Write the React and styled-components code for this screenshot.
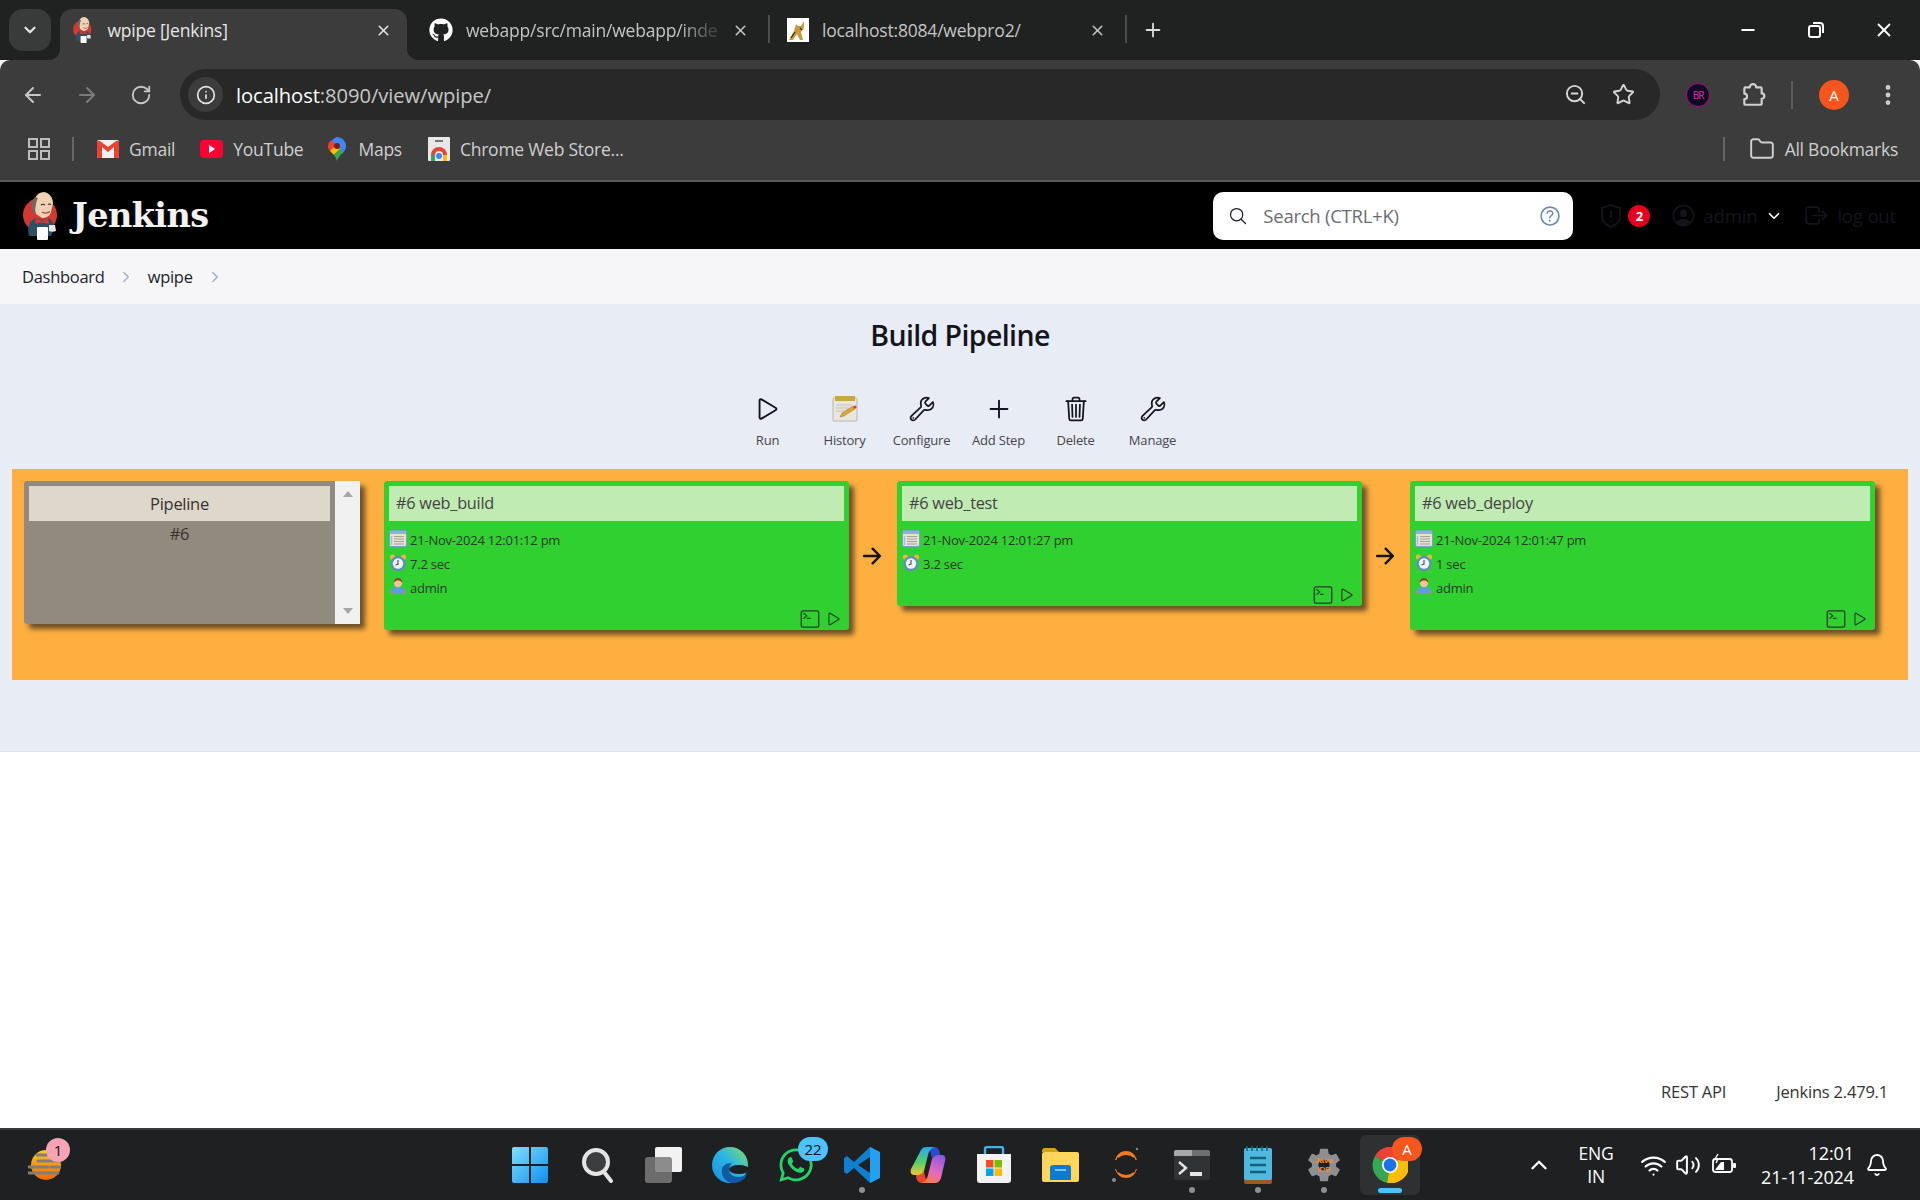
import React from "react";
import styled, { createGlobalStyle } from "styled-components";
import {
  ArrowLeft, ArrowRight, RotateCw, Info, ZoomOut, Star, EllipsisVertical,
  Folder, ChevronDown, ChevronUp, Minus, X, Plus, Wifi, Volume2, Bell,
} from "lucide-react";
import { FaGithub, FaWhatsapp } from "react-icons/fa";
import {
  IoPlayOutline, IoBuildOutline, IoAddOutline, IoTrashOutline, IoTerminalOutline,
  IoArrowForwardOutline, IoSearchOutline, IoHelpCircleOutline, IoPersonCircleOutline,
  IoLogOutOutline, IoChevronForward, IoSettingsSharp,
} from "react-icons/io5";

const Global = createGlobalStyle`
  html, body { margin: 0; padding: 0; background: #fff; }
  body { font-family: "Open Sans", "Noto Sans", sans-serif; }
  * { box-sizing: border-box; }
`;

const Screen = styled.div`
  width: 1920px;
  height: 1200px;
  display: flex;
  flex-direction: column;
  overflow: hidden;
`;

/* ---------- browser chrome ---------- */
const TabStrip = styled.div`
  height: 60px;
  background: #202221;
  display: flex;
  align-items: flex-end;
  padding-left: 9px;
  color: #c7c7c7;
`;
const TabMenu = styled.div`
  width: 42px;
  height: 42px;
  margin: 0 9px 9px 0;
  border-radius: 14px;
  background: #393b3b;
  display: flex;
  align-items: center;
  justify-content: center;
  color: #e3e3e3;
`;
const Tab = styled.div`
  position: relative;
  width: ${(p) => p.$w}px;
  height: 51px;
  padding: 0 ${(p) => p.$pr}px 9px ${(p) => p.$pl}px;
  display: flex;
  align-items: center;
  font-size: 17.5px;
  letter-spacing: -0.2px;
  color: ${(p) => (p.$active ? "#e6e6e6" : "#c4c4c4")};
  background: ${(p) => (p.$active ? "#3c3c3c" : "transparent")};
  border-radius: 12px 12px 0 0;
  ${(p) => p.$active && `
    &::before, &::after {
      content: "";
      position: absolute;
      bottom: 0;
      width: 12px;
      height: 12px;
    }
    &::before { left: -12px; background: radial-gradient(circle at 0 0, transparent 12px, #3c3c3c 12.5px); }
    &::after { right: -12px; background: radial-gradient(circle at 100% 0, transparent 12px, #3c3c3c 12.5px); }
  `}
`;
const TabDivider = styled.div`
  width: 2px;
  height: 28px;
  margin-bottom: 17px;
  background: #4c4e4e;
`;
const TabTitle = styled.span`
  flex: 1;
  margin-left: ${(p) => p.$gap}px;
  white-space: nowrap;
  -webkit-mask-image: ${(p) => (p.$fade ? "linear-gradient(90deg,#000 80%,rgba(0,0,0,.25) 92%)" : "none")};
`;
const NewTab = styled.div`
  width: 52px;
  height: 42px;
  margin-bottom: 9px;
  display: flex;
  align-items: center;
  justify-content: center;
  color: #dcdcdc;
`;
const WindowControls = styled.div`
  margin-left: auto;
  height: 60px;
  display: flex;
  align-items: center;
  padding-right: 2px;
  color: #fff;
`;
const WindowButton = styled.div`
  width: 68px;
  display: flex;
  justify-content: center;
`;
const ToolbarRow = styled.div`
  height: 60px;
  background: #3c3c3c;
  border-radius: 10px 10px 0 0;
  display: flex;
  align-items: flex-start;
  padding: 9px 0 0 0;
  color: #c7c7c7;
`;
const NavButton = styled.div`
  width: 54px;
  height: 51px;
  display: flex;
  align-items: center;
  justify-content: center;
  color: ${(p) => (p.$off ? "#7b7b7b" : "#c7c7c7")};
`;
const NavGroup = styled.div`
  display: flex;
  padding-left: 6px;
  width: 180px;
`;
const Omnibox = styled.div`
  width: 1480px;
  height: 51px;
  background: #282828;
  border-radius: 26px;
  display: flex;
  align-items: center;
  padding: 0 13px 0 8px;
`;
const SiteChip = styled.div`
  width: 35px;
  height: 35px;
  border-radius: 50%;
  background: #3c3c3c;
  display: flex;
  align-items: center;
  justify-content: center;
  color: #e3e3e3;
`;
const Url = styled.div`
  margin-left: 13px;
  flex: 1;
  font-size: 20.2px;
  letter-spacing: -0.08px;
  color: #c7c7c7;
  b { font-weight: 400; color: #fff; }
`;
const OmniIcon = styled.div`
  width: 48px;
  display: flex;
  justify-content: center;
  color: #d6d6d6;
`;
const ExtArea = styled.div`
  flex: 1;
  height: 51px;
  display: flex;
  align-items: center;
`;
const ExtBadge = styled.div`
  width: 24px;
  height: 24px;
  margin-left: 26px;
  border-radius: 50%;
  background: #0b0b22;
  border: 1px solid #c2008c;
  color: #f020b0;
  font-size: 10px;
  letter-spacing: -1px;
  display: flex;
  align-items: center;
  justify-content: center;
`;
const ToolSep = styled.div`
  width: 2px;
  height: 28px;
  background: #5c5c5c;
  margin-left: ${(p) => p.$ml}px;
`;
const Avatar = styled.div`
  width: 30px;
  height: 30px;
  margin-left: 26px;
  border-radius: 50%;
  background: #f4561d;
  color: #fff;
  font-size: 15px;
  display: flex;
  align-items: center;
  justify-content: center;
`;
const PuzzleWrap = styled.div`
  margin-left: 30px;
  display: flex;
  color: #d0d0d0;
`;
const MenuDots = styled.div`
  margin-left: 26px;
  display: flex;
  color: #d0d0d0;
`;
const BookmarkBar = styled.div`
  height: 62px;
  background: #3c3c3c;
  border-bottom: 2px solid #5a5a5a;
  display: flex;
  align-items: center;
  padding-left: 28px;
  padding-bottom: 2px;
  font-size: 17.5px;
  letter-spacing: -0.25px;
  color: #cfcfcf;
`;
const BarSep = styled.div`
  width: 2px;
  height: 24px;
  background: #666;
  margin: 0 ${(p) => p.$mr}px 0 ${(p) => p.$ml}px;
`;
const Bookmark = styled.div`
  display: flex;
  align-items: center;
  gap: ${(p) => p.$gap || 10}px;
  margin-right: ${(p) => p.$mr}px;
  white-space: nowrap;
`;
const BookmarkEnd = styled.div`
  margin-left: auto;
  display: flex;
  align-items: center;
  padding-right: 22px;
`;

/* ---------- jenkins header ---------- */
const Header = styled.header`
  height: 67px;
  background: #000;
  display: flex;
  align-items: center;
  padding-left: 23px;
`;
const Brand = styled.div`
  display: flex;
  align-items: center;
  gap: 13px;
  font-family: "DejaVu Serif", serif;
  font-weight: 700;
  font-size: 33.5px;
  letter-spacing: -0.6px;
  color: #f2f2f2;
`;
const SearchBox = styled.div`
  margin-left: auto;
  width: 360px;
  height: 48px;
  border-radius: 10px;
  background: #fff;
  display: flex;
  align-items: center;
  padding: 0 10px 0 15px;
  font-size: 18.5px;
  letter-spacing: -0.25px;
  color: #6c6c72;
`;
const SearchText = styled.span`
  flex: 1;
  margin-left: 15px;
`;
const HeaderAction = styled.div`
  display: flex;
  align-items: center;
  color: #14141f;
  font-size: 18.6px;
  letter-spacing: -0.2px;
  margin-left: ${(p) => p.$ml}px;
  gap: ${(p) => p.$gap || 0}px;
`;
const CountBadge = styled.span`
  width: 22px;
  height: 22px;
  border-radius: 50%;
  background: #e6001f;
  color: #fff;
  font-size: 13px;
  font-weight: 700;
  display: flex;
  align-items: center;
  justify-content: center;
`;
const HeaderRight = styled.div`
  display: flex;
  align-items: center;
  padding-right: 24px;
`;
const Caret = styled.span`
  display: flex;
  color: #fff;
  margin-left: 2px;
`;

/* ---------- breadcrumb ---------- */
const Crumbs = styled.nav`
  height: 55px;
  background: #f6f6f8;
  display: flex;
  align-items: center;
  padding-left: 22px;
  font-size: 16.5px;
  font-weight: 500;
  letter-spacing: -0.28px;
  color: #1e1e2a;
`;
const CrumbArrow = styled.span`
  display: flex;
  color: #9db0cc;
  margin: 0 ${(p) => p.$mr}px 0 ${(p) => p.$ml}px;
`;

/* ---------- build pipeline ---------- */
const PipelineArea = styled.main`
  height: 448px;
  background: #e8ecf4;
  border-bottom: 1px solid #dfe3ea;
  display: flex;
  flex-direction: column;
  padding-top: 12px;
`;
const Title = styled.h1`
  margin: 0;
  height: 38px;
  line-height: 38px;
  text-align: center;
  font-size: 28.5px;
  font-weight: 600;
  letter-spacing: -0.6px;
  color: #14141f;
`;
const ActionBar = styled.div`
  display: flex;
  justify-content: center;
  padding: 40px 0 19px;
`;
const ActionItem = styled.div`
  width: 77px;
  display: flex;
  flex-direction: column;
  align-items: center;
  font-size: 13px;
  letter-spacing: -0.2px;
  color: #45454d;
`;
const ActionIcon = styled.div`
  height: 30px;
  display: flex;
  align-items: center;
  justify-content: center;
  color: #14141f;
  margin-bottom: 6px;
`;
const ActionLabel = styled.div`
  height: 20px;
  line-height: 20px;
`;
const Stage = styled.div`
  height: 211px;
  margin: 0 12px;
  background: #feaf40;
  padding: 12px;
  display: flex;
  align-items: flex-start;
`;
const RevisionPane = styled.div`
  width: 336px;
  height: 143px;
  margin-right: 24px;
  display: flex;
  box-shadow: 5px 5px 5px rgba(50, 40, 30, 0.7);
  border-radius: 3px 0 0 3px;
`;
const RevisionBody = styled.div`
  flex: 1;
  background: #918a7f;
  padding: 5px;
  border-radius: 3px 0 0 3px;
  text-align: center;
  font-size: 16.5px;
  letter-spacing: -0.3px;
  color: #38332d;
`;
const RevisionHead = styled.div`
  height: 35px;
  line-height: 35px;
  background: #ded7cc;
`;
const RevisionCell = styled.div`
  margin-top: 1px;
  height: 24px;
  line-height: 24px;
`;
const ScrollTrack = styled.div`
  width: 25px;
  background: #f1f1f1;
  display: flex;
  flex-direction: column;
  justify-content: space-between;
  align-items: center;
  padding: 10px 0;
`;
const ScrollArrow = styled.div`
  width: 0;
  height: 0;
  border-left: 5.5px solid transparent;
  border-right: 5.5px solid transparent;
  ${(p) => (p.$up ? "border-bottom: 6px solid #a6a6a6;" : "border-top: 6px solid #a6a6a6;")}
`;
const BuildCard = styled.div`
  width: 465px;
  flex: none;
  background: #30d030;
  padding: 5px 5px 3px;
  border-radius: 3px;
  box-shadow: 5px 5px 5px rgba(50, 40, 30, 0.7);
  color: #333;
`;
const BuildHead = styled.div`
  height: 35px;
  line-height: 35px;
  padding-left: 7px;
  background: #c0ebb3;
  font-size: 16.3px;
  letter-spacing: -0.25px;
  color: #444;
`;
const BuildMeta = styled.div`
  margin-top: 9px;
  display: flex;
  flex-direction: column;
  gap: 7px;
`;
const MetaRow = styled.div`
  height: 17px;
  display: flex;
  align-items: center;
  gap: 3px;
  font-size: 13px;
  letter-spacing: -0.22px;
  color: #2f3a2f;
  span { position: relative; top: 1px; }
`;
const BuildTools = styled.div`
  margin-top: 15px;
  height: 17px;
  padding-right: 1px;
  display: flex;
  justify-content: flex-end;
  align-items: center;
  gap: 5px;
  color: #2c3a2c;
`;
const Connector = styled.div`
  width: 48px;
  flex: none;
  height: 149px;
  padding-right: 3px;
  display: flex;
  align-items: center;
  justify-content: center;
  color: #14141f;
`;

/* ---------- footer ---------- */
const Blank = styled.div`
  flex: 1;
  background: #fff;
  display: flex;
  justify-content: flex-end;
  align-items: flex-end;
  padding: 0 32px 25px 0;
  gap: 50px;
  font-size: 16.5px;
  letter-spacing: -0.2px;
  color: #333;
`;

/* ---------- windows taskbar ---------- */
const Taskbar = styled.div`
  height: 72px;
  background: #1e2022;
  border-top: 2px solid #3a3a3a;
  display: flex;
  align-items: stretch;
  color: #fff;
`;
const WidgetSlot = styled.div`
  width: 499px;
  padding-left: 28px;
  display: flex;
  align-items: center;
`;
const WidgetIcon = styled.div`
  position: relative;
  display: flex;
`;
const WidgetBadge = styled.span`
  position: absolute;
  top: -11px;
  right: -6px;
  width: 24px;
  height: 24px;
  border-radius: 50%;
  background: #f6a3b4;
  color: #111;
  font-size: 15px;
  display: flex;
  align-items: center;
  justify-content: center;
`;
const TaskIcons = styled.div`
  display: flex;
`;
const TaskSlot = styled.div`
  position: relative;
  width: 66px;
  display: flex;
  align-items: center;
  justify-content: center;
  ${(p) => p.$current && `
    &::before {
      content: "";
      position: absolute;
      left: 3px; right: 3px; top: 5px; bottom: 5px;
      background: #2e3032;
      border-radius: 6px;
    }
  `}
  > * { position: relative; }
`;
const RunDot = styled.span`
  position: absolute !important;
  bottom: 7px;
  left: 50%;
  margin-left: ${(p) => (p.$current ? -12 : -3)}px;
  width: ${(p) => (p.$current ? 24 : 6)}px;
  height: ${(p) => (p.$current ? 5 : 6)}px;
  border-radius: 3px;
  background: ${(p) => (p.$current ? "#4cc2ff" : "#8f8f8f")};
`;
const TaskBadge = styled.span`
  position: absolute !important;
  top: 7px;
  right: 1px;
  min-width: 30px;
  height: 24px;
  border-radius: 12px;
  background: ${(p) => p.$bg};
  color: ${(p) => p.$fg};
  font-size: 15px;
  display: flex;
  align-items: center;
  justify-content: center;
`;
const Tray = styled.div`
  margin-left: auto;
  display: flex;
  align-items: center;
  padding-right: 31px;
  font-size: 18px;
`;
const TrayLang = styled.div`
  width: 60px;
  margin-left: 14px;
  text-align: center;
  line-height: 23px;
  letter-spacing: -0.2px;
  font-size: 17.5px;
`;
const TrayIcon = styled.div`
  display: flex;
  margin-left: ${(p) => p.$ml}px;
`;
const Clock = styled.div`
  margin-left: 24px;
  text-align: right;
  line-height: 24px;
  letter-spacing: -0.1px;
`;

/* ---------- drawings ---------- */
const JenkinsLogo = ({ size = 48 }) => (
  <svg width={size * 0.75} height={size} viewBox="0 0 36 48">
    <circle cx="17" cy="23" r="17" fill="#d33833" />
    <path d="M6 44c-2-7-1-15 7-18l6 2 6-2c4 2 6 6 6 10l-3 8z" fill="#2f4f63" />
    <path d="M12 6c-2 3-2 7-1 10l2 6 6 4c4 0 8-2 9-6l2-9c0-6-4-10-9-11-4 0-7 2-9 6z" fill="#eed2b2" />
    <path d="M12 5c-3 3-4 9-2 15l3 3c-1-3-1-7 0-10 0-3 1-5 2-7z" fill="#6d6a65" />
    <path d="M18 13q2-1.500 4 0M25 12.500q1.500-1 3 0" stroke="#3a2a20" strokeWidth="1.200" fill="none" />
    <path d="M19 20q4 2.500 8-.5" stroke="#8a5a50" strokeWidth="1.400" fill="none" />
    <path d="M13 26l6 3 6-3 1 6-6-1.500-1 1-1-1-6 1.500z" fill="#d33833" />
    <rect x="14" y="35" width="11" height="13" rx="1" fill="#fff" />
    <path d="M26 33h6l1 6c-2 1-5 1-7 0z" fill="#e8e6e0" />
  </svg>
);

const Gmail = () => (
  <svg width="22" height="18" viewBox="0 0 22 18">
    <rect width="22" height="18" rx="2" fill="#f0f0f0" />
    <path d="M0 3v13a2 2 0 0 0 2 2h3V7l6 5 6-5v11h3a2 2 0 0 0 2-2V3a2 2 0 0 0-3-2l-8 6-8-6a2 2 0 0 0-3 2z" fill="#ea4335" />
  </svg>
);
const YouTube = () => (
  <svg width="23" height="18" viewBox="0 0 23 18">
    <rect width="23" height="18" rx="4" fill="#ff0033" />
    <path d="M9 5l6 4-6 4z" fill="#fff" />
  </svg>
);
const Maps = () => (
  <svg width="18" height="24" viewBox="0 0 18 24">
    <path d="M9 0a9 9 0 0 1 9 9c0 3-2 6-4 8L3 6a9 9 0 0 1 6-6z" fill="#4285f4" />
    <path d="M3 3a9 9 0 0 0-3 6c0 2 1 4 2 5l6-6z" fill="#ea4335" />
    <path d="M2 14l6-6 4 4-6 6z" fill="#fbbc04" />
    <path d="M6 18l6-6 3 3c-2 3-5 5-6 9-1-3-2-4-3-6z" fill="#34a853" />
    <circle cx="9" cy="9" r="3" fill="#7a1f18" />
  </svg>
);
const WebStore = () => (
  <svg width="22" height="24" viewBox="0 0 22 24">
    <rect width="22" height="24" rx="1" fill="#e8e8e8" />
    <rect x="7" y="3" width="8" height="2" fill="#777" />
    <path d="M3 24v-6a8 8 0 0 1 16 0v6h-4v-6a4 4 0 0 0-8 0v6z" fill="#ea4335" />
    <path d="M3 24v-6h4v6z" fill="#34a853" />
    <path d="M15 24v-6h4v6z" fill="#fbbc04" />
    <circle cx="11" cy="19" r="3" fill="#4285f4" />
  </svg>
);
const Tomcat = () => (
  <svg width="22" height="24" viewBox="0 0 22 24">
    <rect width="22" height="24" fill="#fff" />
    <path d="M2 22l5-9 2-7 2 2 3 0 3-5v7l-3 4 2 8h-3l-3-6-4 6z" fill="#c79a3d" />
    <path d="M4 20l4-6M13 10l2 2" stroke="#3a2a14" strokeWidth="1.2" />
  </svg>
);
const AppsGrid = () => (
  <svg width="22" height="22" viewBox="0 0 22 22" fill="none" stroke="#bdbdbd" strokeWidth="2">
    <rect x="1" y="1" width="8" height="8" />
    <rect x="13" y="1" width="8" height="8" />
    <rect x="1" y="13" width="8" height="8" />
    <rect x="13" y="13" width="8" height="8" />
  </svg>
);
const ChromePuzzle = () => (
  <svg width="26" height="26" viewBox="0 0 24 24" fill="none" stroke="currentColor" strokeWidth="2" strokeLinejoin="round">
    <path d="M5 5h4a3 3 0 0 1 6 0h4a1 1 0 0 1 1 1v4.500a2.500 2.500 0 0 1 0 5V20a1 1 0 0 1-1 1H5a1 1 0 0 1-1-1v-4.200a2.500 2.500 0 0 0 0-5V6a1 1 0 0 1 1-1z" />
  </svg>
);
const Restore = () => (
  <svg width="18" height="18" viewBox="0 0 18 18" fill="none" stroke="#fff" strokeWidth="2">
    <rect x="2" y="5" width="11" height="11" rx="2" />
    <path d="M6 2h7a3 3 0 0 1 3 3v7" />
  </svg>
);
const WarnShield = () => (
  <svg width="26" height="26" viewBox="0 0 26 26" fill="none" stroke="#14141f" strokeWidth="1.8">
    <path d="M13 2l9 3v8c0 5-4 9-9 11-5-2-9-6-9-11V5z" />
    <path d="M13 8v7M13 18v1" />
  </svg>
);
const HistoryNote = () => (
  <svg width="26" height="28" viewBox="0 0 26 28">
    <rect x="1" y="3" width="24" height="23" rx="1" fill="#e8e6df" stroke="#b9b6ad" />
    <rect x="3" y="1" width="20" height="5" fill="#c9a93c" />
    <path d="M4 10h16M4 13h13M4 16h9" stroke="#c4c2bb" />
    <path d="M8 22l2-4 11-7 2 3-11 7z" fill="#e0a43a" stroke="#a67622" strokeWidth=".5" />
    <circle cx="23" cy="12" r="1.6" fill="#e23a2e" />
  </svg>
);
const CalIcon = () => (
  <svg width="18" height="17" viewBox="0 0 18 17">
    <rect x=".5" y=".5" width="17" height="16" rx="1.5" fill="#e6e2d8" stroke="#7b9fc8" />
    <rect x="1" y="1" width="16" height="3" fill="#8fb2da" />
    <path d="M5 6.5h10M5 9h10M5 11.5h10M5 14h10" stroke="#a89f8c" />
    <path d="M2.5 6v9" stroke="#9cc0e6" strokeWidth="1.5" />
  </svg>
);
const ClockIcon = () => (
  <svg width="18" height="18" viewBox="0 0 18 18">
    <circle cx="3.5" cy="3" r="2.6" fill="#e9b93e" />
    <circle cx="14.5" cy="3" r="2.6" fill="#e9b93e" />
    <circle cx="9" cy="9.5" r="7.5" fill="#5b8fc4" />
    <circle cx="9" cy="9.5" r="5.2" fill="#eef3f6" />
    <path d="M9 6v4l-2.5 1" stroke="#555" strokeWidth="1.2" fill="none" />
    <path d="M3 16l2-1.5M15 16l-2-1.5" stroke="#8a8a8a" strokeWidth="1.6" />
  </svg>
);
const UserIcon = () => (
  <svg width="18" height="17" viewBox="0 0 18 17">
    <path d="M1 16c0-5 3-7 8-7s8 2 8 7z" fill="#5a9de0" />
    <circle cx="9" cy="5" r="4.2" fill="#f0c49a" />
    <path d="M4.800 5C4.500 1.500 7 0 9 0s4.500 1.500 4.200 5c-1-2-3-2.500-4.200-2.500S5.800 3 4.800 5z" fill="#8a4a1e" />
    <path d="M1 13l3 3M17 13l-3 3" stroke="#c68a52" strokeWidth="1.6" />
  </svg>
);

/* taskbar art */
const WinLogo = () => (
  <svg width="36" height="36" viewBox="2 0 36 36" overflow="visible">
    <defs>
      <linearGradient id="win" x1="0" y1="0" x2="1" y2="1">
        <stop offset="0" stopColor="#7fe0ff" />
        <stop offset="1" stopColor="#0f8ef0" />
      </linearGradient>
    </defs>
    <path d="M2 0h15v17H0V2a2 2 0 0 1 2-2zM19 0h15a2 2 0 0 1 2 2v15H19zM0 19h17v17H2a2 2 0 0 1-2-2zM19 19h17v15a2 2 0 0 1-2 2H19z" fill="url(#win)" />
  </svg>
);
const WinSearch = () => (
  <svg width="34" height="36" viewBox="0 0 34 36" fill="none">
    <circle cx="15" cy="15" r="12" fill="#3b3d3f" stroke="#e4e4e4" strokeWidth="4" />
    <path d="M23 25l7 9" stroke="#e4e4e4" strokeWidth="4" strokeLinecap="round" />
  </svg>
);
const TaskView = () => (
  <svg width="38" height="36" viewBox="0 0 38 36">
    <rect x="10" y="0" width="27" height="25" rx="2" fill="#f2f2f2" />
    <rect x="0" y="10" width="27" height="26" rx="3" fill="#7a7a7a" fillOpacity=".85" />
  </svg>
);
const Edge = () => (
  <svg width="36" height="36" viewBox="0 0 36 36">
    <defs>
      <linearGradient id="edg" x1="0" y1="1" x2="1" y2="0">
        <stop offset="0" stopColor="#1590df" />
        <stop offset=".55" stopColor="#2cb6e4" />
        <stop offset="1" stopColor="#8be05a" />
      </linearGradient>
    </defs>
    <circle cx="18" cy="18" r="18" fill="url(#edg)" />
    <ellipse cx="27" cy="22.500" rx="10" ry="4.500" fill="#1e2022" />
    <path d="M11 19C7 28 14 36 21 36c6 0 12-3 14.500-9-5 3.500-13 4-16.500.500-3-3-2.500-8 1-11-4-1-7 .500-8 2.500z" fill="#0f5aa6" />
  </svg>
);
const VSCode = () => (
  <svg width="36" height="36" viewBox="0 0 36 36">
    <path d="M26 0L10 15 3 9 0 11v14l3 2 7-6 16 15 4-2V2zM26 10v16L14 18z" fill="#0f7fd0" fillRule="evenodd" />
    <path d="M26 0l10 5v26l-10 5z" fill="#22a0f2" />
  </svg>
);
const Copilot = () => (
  <svg width="36" height="36" viewBox="0 0 36 36">
    <defs>
      <linearGradient id="cp1" x1="0.300" y1="0" x2="0.300" y2="1">
        <stop offset="0" stopColor="#2aa6f0" />
        <stop offset=".55" stopColor="#55cf6a" />
        <stop offset="1" stopColor="#f7c52c" />
      </linearGradient>
      <linearGradient id="cp2" x1="0.700" y1="0" x2="0.300" y2="1">
        <stop offset="0" stopColor="#8e5be0" />
        <stop offset=".6" stopColor="#e76ac0" />
        <stop offset="1" stopColor="#f77f3a" />
      </linearGradient>
    </defs>
    <path d="M16 0h8c4 0 6 3 6 8h-2c-3 0-5 2-6 4-1-6-2-10-6-12z" fill="#2b4bd0" />
    <path d="M20 36h-8c-4 0-6-3-6-8h2c3 0 5-2 6-4 1 6 2 10 6 12z" fill="#e8452e" />
    <path d="M11 3c1-2 3-3 5-3h9c-4 1-6 4-7 8l-4 16c-1 2-3 4-6 4H4c-3 0-4-3-3-6z" fill="url(#cp1)" />
    <path d="M25 36h-5-9c4-1 6-4 7-8l4-16c1-2 3-4 6-4h4c3 0 4 3 3 6l-4 17c-1 3-3 5-6 5z" fill="url(#cp2)" />
  </svg>
);
const Store = () => (
  <svg width="36" height="38" viewBox="0 0 36 38">
    <path d="M9 8V3a2 2 0 0 1 2-2h14a2 2 0 0 1 2 2v5" fill="none" stroke="#3fb3ea" strokeWidth="2.4" />
    <path d="M1 8h34v26a3 3 0 0 1-3 3H4a3 3 0 0 1-3-3z" fill="#f2f2f2" />
    <rect x="10" y="14" width="7.500" height="7.500" fill="#f25022" />
    <rect x="18.500" y="14" width="7.500" height="7.500" fill="#7fba00" />
    <rect x="10" y="22.500" width="7.500" height="7.500" fill="#00a4ef" />
    <rect x="18.500" y="22.500" width="7.500" height="7.500" fill="#ffb900" />
  </svg>
);
const Files = () => (
  <svg width="37" height="34" viewBox="0 0 37 34">
    <path d="M0 3a3 3 0 0 1 3-3h10l4 4H0z" fill="#d9a013" />
    <rect y="4" width="37" height="30" rx="2" fill="#ffd65a" />
    <path d="M8 32V20a3 3 0 0 1 3-3h15a3 3 0 0 1 3 3v12z" fill="#0f7bd0" />
    <rect x="13" y="21" width="11" height="2" fill="#7cc6f5" />
  </svg>
);
const Eclipse = () => (
  <svg width="30" height="36" viewBox="0 0 30 36" fill="none">
    <path d="M4 13c2-6 6-9 11-9s9 3 11 9H4z" fill="#f07a24" />
    <path d="M4 22c2 6 6 9 11 9s9-3 11-9H4z" fill="#f07a24" />
    <path d="M6 11.500h18M6 24.500h18" stroke="#1e2022" strokeWidth="1.400" />
    <ellipse cx="15" cy="18" rx="11" ry="10" fill="#1e2022" />
    <circle cx="3" cy="33" r="2" fill="#8a8a8a" />
    <circle cx="26" cy="2" r="1.200" fill="#8a8a8a" />
  </svg>
);
const TerminalApp = () => (
  <svg width="36" height="30" viewBox="0 0 36 30" fill="none">
    <rect width="36" height="30" rx="2" fill="#2f3336" />
    <path d="M0 2a2 2 0 0 1 2-2h16v6H0z" fill="#a8a8a8" />
    <path d="M18 0h16a2 2 0 0 1 2 2v4H18z" fill="#707070" />
    <path d="M5 12l7 6-7 6" stroke="#e6e6e6" strokeWidth="2.400" />
    <rect x="16" y="22" width="12" height="4" fill="#e6e6e6" />
  </svg>
);
const Notepad = () => (
  <svg width="28" height="38" viewBox="0 0 28 38">
    <rect y="2" width="28" height="36" rx="2" fill="#9a5a1f" />
    <rect y="2" width="28" height="32" rx="2" fill="#4fb8dc" />
    <path d="M3 0v5M8 0v5M13 0v5M18 0v5M23 0v5" stroke="#17607c" strokeWidth="1.500" />
    <path d="M6 12h16M6 19h16M6 26h16" stroke="#14617f" strokeWidth="2.400" />
  </svg>
);
const GearWrap = styled.div`
  position: relative;
  width: 36px;
  height: 38px;
  color: #8f8f8f;
  display: flex;
  align-items: center;
  justify-content: center;
`;
const GearText = styled.span`
  position: absolute;
  inset: 0;
  display: flex;
  flex-direction: column;
  align-items: center;
  justify-content: center;
  color: #f0902a;
  font-family: "Liberation Sans", sans-serif;
  font-size: 8px;
  font-weight: 700;
  line-height: 9px;
`;
const Chrome = () => (
  <svg width="36" height="36" viewBox="0 0 36 36">
    <path d="M18 18L3 9a18 18 0 0 1 31-1z" fill="#ea4335" />
    <path d="M18 18L3 9a18 18 0 0 0 12 26.800z" fill="#34a853" />
    <path d="M18 18l16-10a18 18 0 0 1-19 27.800z" fill="#fbbc04" />
    <circle cx="18" cy="18" r="8" fill="#fff" />
    <circle cx="18" cy="18" r="6.400" fill="#1a73e8" />
  </svg>
);
const Sun = () => (
  <svg width="36" height="32" viewBox="0 0 36 32">
    <defs>
      <linearGradient id="sun" x1="0" y1="0" x2="0" y2="1">
        <stop offset="0" stopColor="#ffc81e" />
        <stop offset="1" stopColor="#f06a00" />
      </linearGradient>
    </defs>
    <circle cx="18" cy="16" r="15" fill="url(#sun)" />
    <path d="M9 6h10M10 12h22M1 18h19M23 18h8M0 24h30" stroke="#7e7e7e" strokeWidth="3" strokeLinecap="round" />
  </svg>
);
const Battery = () => (
  <svg width="26" height="24" viewBox="0 0 26 24" fill="none" stroke="#fff" strokeWidth="1.800">
    <rect x="2" y="6" width="19" height="13" rx="2.500" />
    <rect x="22" y="10" width="3" height="5" rx="1" fill="#fff" stroke="none" />
    <path d="M4 17l6-8h3v8z" fill="#fff" stroke="none" />
    <path d="M7 1L4 6h3L5 10" strokeWidth="1.400" />
  </svg>
);

const RowIconSet = [<CalIcon key="c" />, <ClockIcon key="k" />, <UserIcon key="u" />];

const builds = [
  { title: "#6 web_build", rows: ["21-Nov-2024 12:01:12 pm", "7.2 sec", "admin"] },
  { title: "#6 web_test", rows: ["21-Nov-2024 12:01:27 pm", "3.2 sec"] },
  { title: "#6 web_deploy", rows: ["21-Nov-2024 12:01:47 pm", "1 sec", "admin"] },
];

const actions = [
  { label: "Run", icon: <IoPlayOutline size={30} /> },
  { label: "History", icon: <HistoryNote /> },
  { label: "Configure", icon: <IoBuildOutline size={28} /> },
  { label: "Add Step", icon: <IoAddOutline size={30} /> },
  { label: "Delete", icon: <IoTrashOutline size={28} /> },
  { label: "Manage", icon: <IoBuildOutline size={28} /> },
];

const taskApps = [
  { art: <WinLogo /> },
  { art: <WinSearch /> },
  { art: <TaskView /> },
  { art: <Edge /> },
  { art: <FaWhatsapp size={38} color="#25d366" />, badge: "22", bg: "#4cc2ff", fg: "#111" },
  { art: <VSCode />, dot: true },
  { art: <Copilot /> },
  { art: <Store /> },
  { art: <Files /> },
  { art: <Eclipse /> },
  { art: <TerminalApp />, dot: true },
  { art: <Notepad />, dot: true },
  {
    art: (
      <GearWrap>
        <IoSettingsSharp size={38} />
        <GearText><span>Java</span><span>IDE</span></GearText>
      </GearWrap>
    ),
    dot: true,
  },
  { art: <Chrome />, current: true, badge: "A", bg: "#f4561d", fg: "#fff" },
];

export default function App() {
  return (
    <Screen>
      <Global />
      <TabStrip>
        <TabMenu><ChevronDown size={18} strokeWidth={3} /></TabMenu>
        <Tab $active $w={347} $pl={13} $pr={15}>
          <JenkinsLogo size={26} />
          <TabTitle $gap={15}>wpipe [Jenkins]</TabTitle>
          <X size={17} strokeWidth={2.2} />
        </Tab>
        <Tab $w={361} $pl={22} $pr={19}>
          <FaGithub size={24} color="#fff" />
          <TabTitle $gap={13} $fade>webapp/src/main/webapp/inde</TabTitle>
          <X size={17} strokeWidth={2.2} />
        </Tab>
        <TabDivider />
        <Tab $w={355} $pl={17} $pr={19}>
          <Tomcat />
          <TabTitle $gap={13}>localhost:8084/webpro2/</TabTitle>
          <X size={17} strokeWidth={2.2} />
        </Tab>
        <TabDivider />
        <NewTab><Plus size={22} strokeWidth={2} /></NewTab>
        <WindowControls>
          <WindowButton><Minus size={20} strokeWidth={2.200} /></WindowButton>
          <WindowButton><Restore /></WindowButton>
          <WindowButton><X size={22} strokeWidth={2} /></WindowButton>
        </WindowControls>
      </TabStrip>

      <ToolbarRow>
        <NavGroup>
          <NavButton><ArrowLeft size={24} strokeWidth={2} /></NavButton>
          <NavButton $off><ArrowRight size={24} strokeWidth={2} /></NavButton>
          <NavButton><RotateCw size={22} strokeWidth={2} /></NavButton>
        </NavGroup>
        <Omnibox>
          <SiteChip><Info size={20} strokeWidth={2} /></SiteChip>
          <Url><b>localhost</b>:8090/view/wpipe/</Url>
          <OmniIcon><ZoomOut size={23} strokeWidth={2} /></OmniIcon>
          <OmniIcon><Star size={23} strokeWidth={2} /></OmniIcon>
        </Omnibox>
        <ExtArea>
          <ExtBadge>BR</ExtBadge>
          <PuzzleWrap><ChromePuzzle /></PuzzleWrap>
          <ToolSep $ml={25} />
          <Avatar>A</Avatar>
          <MenuDots><EllipsisVertical size={26} strokeWidth={2.400} /></MenuDots>
        </ExtArea>
      </ToolbarRow>

      <BookmarkBar>
        <AppsGrid />
        <BarSep $ml={22} $mr={23} />
        <Bookmark $mr={25}><Gmail />Gmail</Bookmark>
        <Bookmark $mr={25}><YouTube />YouTube</Bookmark>
        <Bookmark $mr={26} $gap={12}><Maps />Maps</Bookmark>
        <Bookmark $mr={0}><WebStore />Chrome Web Store...</Bookmark>
        <BookmarkEnd>
          <BarSep $ml={0} $mr={24} />
          <Bookmark $mr={0} $gap={10}><Folder size={26} strokeWidth={1.800} />All Bookmarks</Bookmark>
        </BookmarkEnd>
      </BookmarkBar>

      <Header>
        <Brand><JenkinsLogo size={48} />Jenkins</Brand>
        <SearchBox>
          <IoSearchOutline size={20} color="#1e1e2a" />
          <SearchText>Search (CTRL+K)</SearchText>
          <IoHelpCircleOutline size={26} color="#6a8ab0" />
        </SearchBox>
        <HeaderRight>
          <HeaderAction $ml={25} $gap={4}><WarnShield /><CountBadge>2</CountBadge></HeaderAction>
          <HeaderAction $ml={20} $gap={6}>
            <IoPersonCircleOutline size={27} />admin
            <Caret><ChevronDown size={18} strokeWidth={2.200} /></Caret>
          </HeaderAction>
          <HeaderAction $ml={20} $gap={7}><IoLogOutOutline size={27} />log out</HeaderAction>
        </HeaderRight>
      </Header>

      <Crumbs>
        Dashboard
        <CrumbArrow $ml={13} $mr={14}><IoChevronForward size={16} /></CrumbArrow>
        wpipe
        <CrumbArrow $ml={14} $mr={0}><IoChevronForward size={16} /></CrumbArrow>
      </Crumbs>

      <PipelineArea>
        <Title>Build Pipeline</Title>
        <ActionBar>
          {actions.map((a) => (
            <ActionItem key={a.label}>
              <ActionIcon>{a.icon}</ActionIcon>
              <ActionLabel>{a.label}</ActionLabel>
            </ActionItem>
          ))}
        </ActionBar>
        <Stage>
          <RevisionPane>
            <RevisionBody>
              <RevisionHead>Pipeline</RevisionHead>
              <RevisionCell>#6</RevisionCell>
            </RevisionBody>
            <ScrollTrack>
              <ScrollArrow $up />
              <ScrollArrow />
            </ScrollTrack>
          </RevisionPane>
          {builds.map((b, i) => (
            <React.Fragment key={b.title}>
              {i > 0 && <Connector><IoArrowForwardOutline size={26} /></Connector>}
              <BuildCard>
                <BuildHead>{b.title}</BuildHead>
                <BuildMeta>
                  {b.rows.map((r, j) => (
                    <MetaRow key={r}>{RowIconSet[j]}<span>{r}</span></MetaRow>
                  ))}
                </BuildMeta>
                <BuildTools>
                  <IoTerminalOutline size={20} />
                  <IoPlayOutline size={18} />
                </BuildTools>
              </BuildCard>
            </React.Fragment>
          ))}
        </Stage>
      </PipelineArea>

      <Blank>
        <span>REST API</span>
        <span>Jenkins 2.479.1</span>
      </Blank>

      <Taskbar>
        <WidgetSlot>
          <WidgetIcon><Sun /><WidgetBadge>1</WidgetBadge></WidgetIcon>
        </WidgetSlot>
        <TaskIcons>
          {taskApps.map((a, i) => (
            <TaskSlot key={i} $current={a.current}>
              {a.art}
              {a.badge && <TaskBadge $bg={a.bg} $fg={a.fg}>{a.badge}</TaskBadge>}
              {(a.dot || a.current) && <RunDot $current={a.current} />}
            </TaskSlot>
          ))}
        </TaskIcons>
        <Tray>
          <ChevronUp size={26} strokeWidth={2.200} />
          <TrayLang>ENG<br />IN</TrayLang>
          <TrayIcon $ml={14}><Wifi size={27} strokeWidth={2} /></TrayIcon>
          <TrayIcon $ml={8}><Volume2 size={26} strokeWidth={1.800} /></TrayIcon>
          <TrayIcon $ml={10}><Battery /></TrayIcon>
          <Clock>12:01<br />21-11-2024</Clock>
          <TrayIcon $ml={11}><Bell size={24} strokeWidth={1.800} /></TrayIcon>
        </Tray>
      </Taskbar>
    </Screen>
  );
}
